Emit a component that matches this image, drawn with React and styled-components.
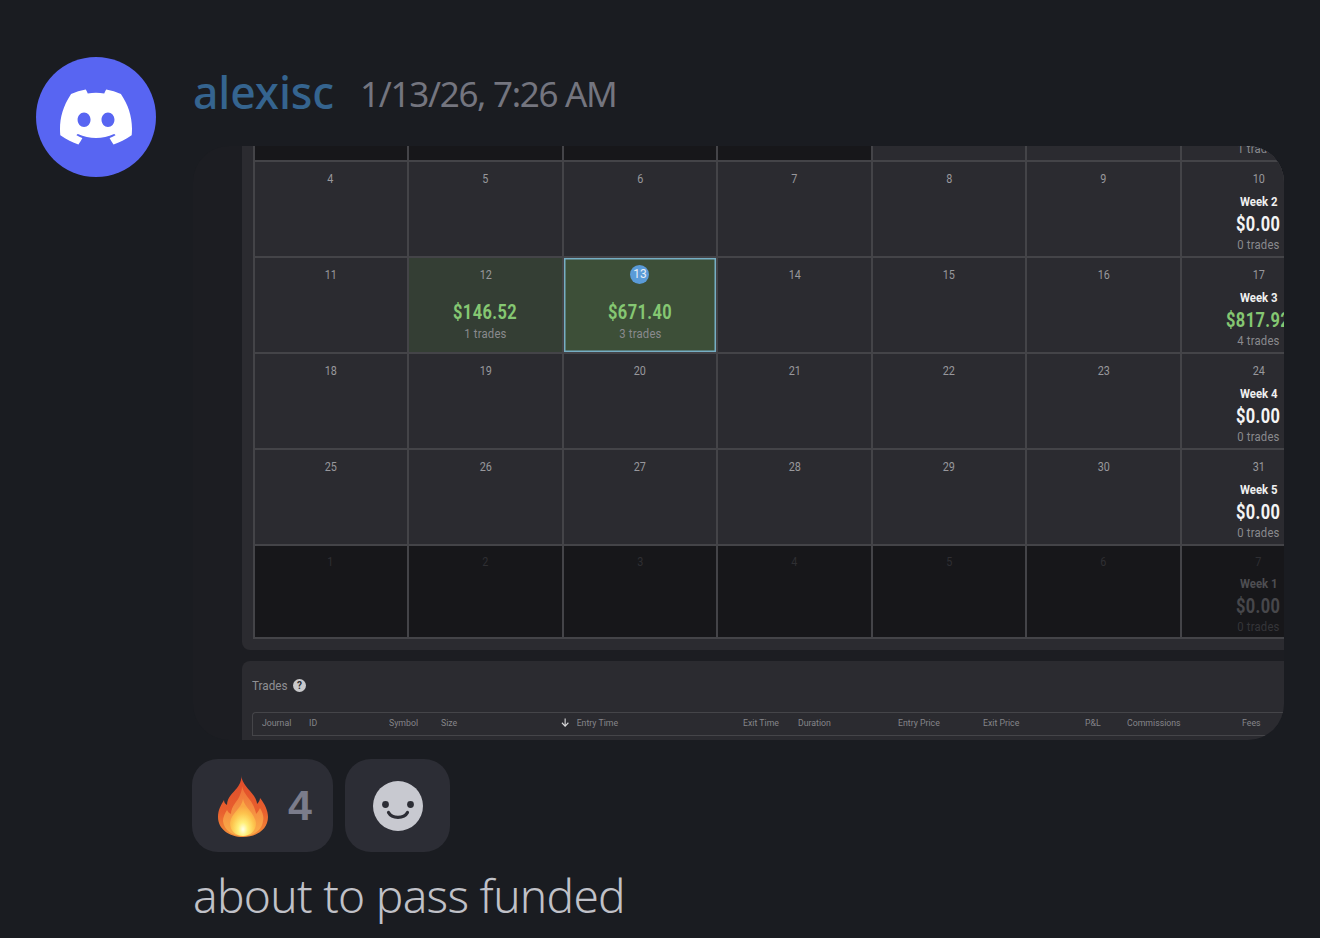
import styled, { createGlobalStyle } from "styled-components";
import { SiDiscord } from "react-icons/si";

const Global = createGlobalStyle`
  html, body {
    margin: 0;
    padding: 0;
    background: #1a1c21;
  }
`;

const Page = styled.div`
  width: 1320px;
  height: 938px;
  overflow: hidden;
  box-sizing: border-box;
  padding: 57px 36px 0;
  display: flex;
  gap: 37px;
  background: #1a1c21;
  font-family: "Noto Sans", sans-serif;
`;

const Avatar = styled.div`
  width: 120px;
  height: 120px;
  flex: none;
  border-radius: 50%;
  background: #5865f2;
  color: #fff;
  display: flex;
  align-items: center;
  justify-content: center;
`;

const Content = styled.div`
  width: 1091px;
  flex: none;
`;

const Header = styled.div`
  height: 89px;
  display: flex;
  align-items: center;
  gap: 26px;
  padding-bottom: 19px;
  box-sizing: border-box;
`;

const Name = styled.span`
  font-size: 44.5px;
  font-weight: 500;
  line-height: 1;
  letter-spacing: -0.1px;
  color: #35648f;
`;

const Stamp = styled.span`
  font-size: 35px;
  font-weight: 400;
  line-height: 1;
  letter-spacing: -1.3px;
  color: #74757f;
  margin-top: 3px;
`;

const Frame = styled.div`
  height: 594px;
  overflow: hidden;
  border-radius: 36px;
  background: #1c1d22;
  padding-left: 49px;
`;

const CalendarPanel = styled.div`
  width: 1100px;
  margin-top: -82px;
  padding: 0 0 11px 10.5px;
  background: #2b2b30;
  border-bottom-left-radius: 8px;
`;

const CalendarGrid = styled.div`
  display: grid;
  grid-template-columns: repeat(7, 152.6px);
  grid-template-rows: repeat(5, 94px) 91px;
  gap: 2px;
  padding: 2px;
  width: max-content;
  background: #444448;
`;

const Cell = styled.div`
  position: relative;
  box-sizing: border-box;
  padding-top: ${(p) => (p.$tone === "last" ? "9px" : "10px")};
  display: flex;
  flex-direction: column;
  align-items: center;
  font-family: Roboto, sans-serif;
  overflow: hidden;
  background: ${(p) =>
    p.$tone === "outside" || p.$tone === "last"
      ? "#17171a"
      : p.$tone === "win"
        ? "#343e34"
        : p.$tone === "today"
          ? "#3d4f38"
          : "#2b2b30"};
  ${(p) => p.$tone === "today" && "box-shadow: inset 0 0 0 1.5px #76aec4;"}
`;

const Day = styled.div`
  height: 14px;
  font-size: 12px;
  line-height: 14px;
  color: ${(p) => (p.$dim ? "#2f2f33" : "#98989c")};
  transform: scaleX(0.9);
`;

const TodayBadge = styled.div`
  width: 19px;
  height: 19px;
  margin-top: -3.5px;
  margin-bottom: -1.5px;
  border-radius: 50%;
  background: #5a9bd8;
  color: #e8eef5;
  font-size: 12px;
  line-height: 19px;
  text-align: center;
`;

const Amount = styled.div`
  margin-top: ${(p) => (p.$week ? "3.5px" : "19px")};
  font-size: 20px;
  line-height: 22px;
  font-weight: 700;
  letter-spacing: 0.5px;
  white-space: nowrap;
  color: ${(p) =>
    p.$dim ? "#47474b" : p.$green ? "#85c772" : "#f4f4f4"};
  transform: scaleX(0.82);
`;

const WeekLabel = styled.div`
  margin-top: ${(p) => (p.$dim ? "7.5px" : "8.5px")};
  font-size: 12px;
  line-height: 15px;
  font-weight: 700;
  color: ${(p) => (p.$dim ? "#4e4e52" : "#f0f0f0")};
  transform: scaleX(0.95);
`;

const TradeCount = styled.div`
  font-size: 12px;
  line-height: 15px;
  margin-top: ${(p) => (p.$week ? "3px" : "4px")};
  letter-spacing: 0.2px;
  white-space: nowrap;
  color: ${(p) => (p.$dim ? "#353539" : "#8a8a8e")};
  transform: scaleX(0.94);
`;

const TradesPanel = styled.div`
  width: 1100px;
  height: 90px;
  margin-top: 11px;
  padding-left: 10px;
  background: #2b2b30;
  border-top-left-radius: 8px;
  font-family: Roboto, sans-serif;
`;

const TradesTitle = styled.div`
  height: 51px;
  box-sizing: border-box;
  padding-bottom: 2px;
  display: flex;
  align-items: center;
  gap: 8px;
  font-size: 13px;
  color: #8f8f93;
`;

const TitleText = styled.span`
  display: inline-block;
  transform: scaleX(0.9);
  transform-origin: left center;
  width: 33px;
`;

const HelpIcon = styled.span`
  width: 13px;
  height: 13px;
  border-radius: 50%;
  background: #c9c9cb;
  color: #2b2b30;
  font-size: 10px;
  font-weight: 700;
  line-height: 13px;
  text-align: center;
`;

const TradesTable = styled.div`
  width: 1028px;
  height: 19px;
  padding-bottom: 3px;
  box-sizing: content-box;
  border: 1px solid #454549;
  border-right: none;
  border-top-left-radius: 4px;
  padding-left: 9px;
  display: grid;
  grid-template-columns: 47px 80px 52px 120px 182px 55px 100px 85px 102px 42px 115px 40px;
  align-items: center;
`;

const HeadLabel = styled.span`
  display: inline-flex;
  align-items: center;
  gap: 8px;
  font-size: 9.5px;
  color: #85858a;
  white-space: nowrap;
  transform: scaleX(0.92);
  transform-origin: left center;
`;

const Reactions = styled.div`
  display: flex;
  gap: 12px;
  margin: 19px 0 0 -1px;
`;

const Chip = styled.div`
  height: 93px;
  width: ${(p) => p.$width}px;
  border-radius: 26px;
  background: #2c2d35;
  display: flex;
  align-items: center;
  justify-content: center;
`;

const ChipCount = styled.span`
  margin: 0 -5px 0 20px;
  font-family: "Liberation Sans", sans-serif;
  font-size: 43px;
  font-weight: 700;
  color: #7b7c8b;
`;

const Message = styled.div`
  margin-top: 13px;
  font-size: 46px;
  font-weight: 300;
  line-height: 60px;
  letter-spacing: -0.7px;
  color: #c0c1c8;
`;

const FireIcon = () => (
  <svg width="50" height="62" viewBox="0 0 50 62">
    <defs>
      <linearGradient id="fireOuter" x1="0" y1="0" x2="0" y2="1">
        <stop offset="0" stopColor="#e04a2a" />
        <stop offset="0.6" stopColor="#e8602e" />
        <stop offset="1" stopColor="#f4903a" />
      </linearGradient>
      <linearGradient id="fireInner" x1="0" y1="0" x2="0" y2="1">
        <stop offset="0" stopColor="#ee6e38" />
        <stop offset="1" stopColor="#fbb04a" />
      </linearGradient>
      <radialGradient id="fireCore" cx="0.5" cy="0.82" r="0.62">
        <stop offset="0" stopColor="#ffffe8" />
        <stop offset="0.3" stopColor="#fff07a" />
        <stop offset="0.7" stopColor="#fdc44e" />
        <stop offset="1" stopColor="#f9a644" />
      </radialGradient>
    </defs>
    <path
      fill="url(#fireOuter)"
      d="M23 0C24 9 31 14 36 21C38 24 39 27 39 29C41 27 42 25 42 23C47 29 50 36 50 42C50 54 39 62 25 62C11 62 0 54 0 42C0 35 3 30 6 25C6 27 7 29 9 30C9 22 15 18 19 13C22 9 24 5 23 0Z"
    />
    <path
      fill="url(#fireInner)"
      d="M24 11C26 20 33 24 36 32C37 35 38 37 38 39C40 37 41 35 42 33C45 38 46 42 45 46C44 55 36 61 25 61C14 61 6 55 5 46C5 42 7 38 9 35C10 37 11 38 13 39C13 31 20 26 22 20C23 17 24 15 24 11Z"
    />
    <path
      fill="url(#fireCore)"
      d="M25 24C26 32 37 38 38 48C38 56 32 61 25 61C18 61 12 56 12 48C13 38 24 33 25 24Z"
    />
  </svg>
);

const SmileIcon = () => (
  <svg width="50" height="50" viewBox="0 0 50 50">
    <circle cx="25" cy="25" r="25" fill="#c8c9d0" />
    <circle cx="12.5" cy="23.5" r="3.4" fill="#2c2d35" />
    <circle cx="37.5" cy="23.5" r="3.4" fill="#2c2d35" />
    <path
      d="M15.5 31.5C19 38 31 38 34.5 31.5"
      fill="none"
      stroke="#2c2d35"
      strokeWidth="3.2"
      strokeLinecap="round"
    />
  </svg>
);

const ArrowDown = () => (
  <svg width="9" height="9" viewBox="0 0 9 9">
    <path
      d="M4.5 0.5V8M1 4.8L4.5 8.2L8 4.8"
      fill="none"
      stroke="#d8d8da"
      strokeWidth="1.2"
    />
  </svg>
);

const weeks = [
  [
    { day: 28, tone: "outside", hide: true },
    { day: 29, tone: "outside", hide: true },
    { day: 30, tone: "outside", hide: true },
    { day: 31, tone: "outside", hide: true },
    { day: 1, hide: true },
    { day: 2, hide: true },
    { day: 3, hide: true, week: "Week 1", amount: "$0.00", trades: "1 trades" },
  ],
  [
    { day: 4 },
    { day: 5 },
    { day: 6 },
    { day: 7 },
    { day: 8 },
    { day: 9 },
    { day: 10, week: "Week 2", amount: "$0.00", trades: "0 trades" },
  ],
  [
    { day: 11 },
    { day: 12, tone: "win", amount: "$146.52", trades: "1 trades", green: true },
    { day: 13, tone: "today", amount: "$671.40", trades: "3 trades", green: true },
    { day: 14 },
    { day: 15 },
    { day: 16 },
    { day: 17, week: "Week 3", amount: "$817.92", trades: "4 trades", green: true },
  ],
  [
    { day: 18 },
    { day: 19 },
    { day: 20 },
    { day: 21 },
    { day: 22 },
    { day: 23 },
    { day: 24, week: "Week 4", amount: "$0.00", trades: "0 trades" },
  ],
  [
    { day: 25 },
    { day: 26 },
    { day: 27 },
    { day: 28 },
    { day: 29 },
    { day: 30 },
    { day: 31, week: "Week 5", amount: "$0.00", trades: "0 trades" },
  ],
  [
    { day: 1, tone: "last", dim: true },
    { day: 2, tone: "last", dim: true },
    { day: 3, tone: "last", dim: true },
    { day: 4, tone: "last", dim: true },
    { day: 5, tone: "last", dim: true },
    { day: 6, tone: "last", dim: true },
    { day: 7, tone: "last", dim: true, week: "Week 1", amount: "$0.00", trades: "0 trades" },
  ],
];

const columns = [
  "Journal",
  "ID",
  "Symbol",
  "Size",
  "Entry Time",
  "Exit Time",
  "Duration",
  "Entry Price",
  "Exit Price",
  "P&L",
  "Commissions",
  "Fees",
];

function DayCell({ cell }) {
  const isToday = cell.tone === "today";
  return (
    <Cell $tone={cell.tone}>
      {isToday ? (
        <TodayBadge>{cell.day}</TodayBadge>
      ) : (
        <Day $dim={cell.dim}>{cell.hide && !cell.week ? "" : cell.day}</Day>
      )}
      {cell.week && (
        <WeekLabel $dim={cell.dim}>{cell.week}</WeekLabel>
      )}
      {cell.amount && (
        <Amount $week={!!cell.week} $green={cell.green} $dim={cell.dim}>
          {cell.amount}
        </Amount>
      )}
      {cell.trades && (
        <TradeCount $week={!!cell.week} $dim={cell.dim}>
          {cell.trades}
        </TradeCount>
      )}
    </Cell>
  );
}

export default function App() {
  return (
    <Page>
      <Global />
      <Avatar>
        <SiDiscord size={72} />
      </Avatar>
      <Content>
        <Header>
          <Name>alexisc</Name>
          <Stamp>1/13/26, 7:26 AM</Stamp>
        </Header>
        <Frame>
          <CalendarPanel>
            <CalendarGrid>
              {weeks.flat().map((cell, i) => (
                <DayCell key={i} cell={cell} />
              ))}
            </CalendarGrid>
          </CalendarPanel>
          <TradesPanel>
            <TradesTitle>
              <TitleText>Trades</TitleText>
              <HelpIcon>?</HelpIcon>
            </TradesTitle>
            <TradesTable>
              {columns.map((label) => (
                <HeadLabel key={label}>
                  {label === "Entry Time" && <ArrowDown />}
                  {label}
                </HeadLabel>
              ))}
            </TradesTable>
          </TradesPanel>
        </Frame>
        <Reactions>
          <Chip $width={141}>
            <FireIcon />
            <ChipCount>4</ChipCount>
          </Chip>
          <Chip $width={105}>
            <SmileIcon />
          </Chip>
        </Reactions>
        <Message>about to pass funded</Message>
      </Content>
    </Page>
  );
}
